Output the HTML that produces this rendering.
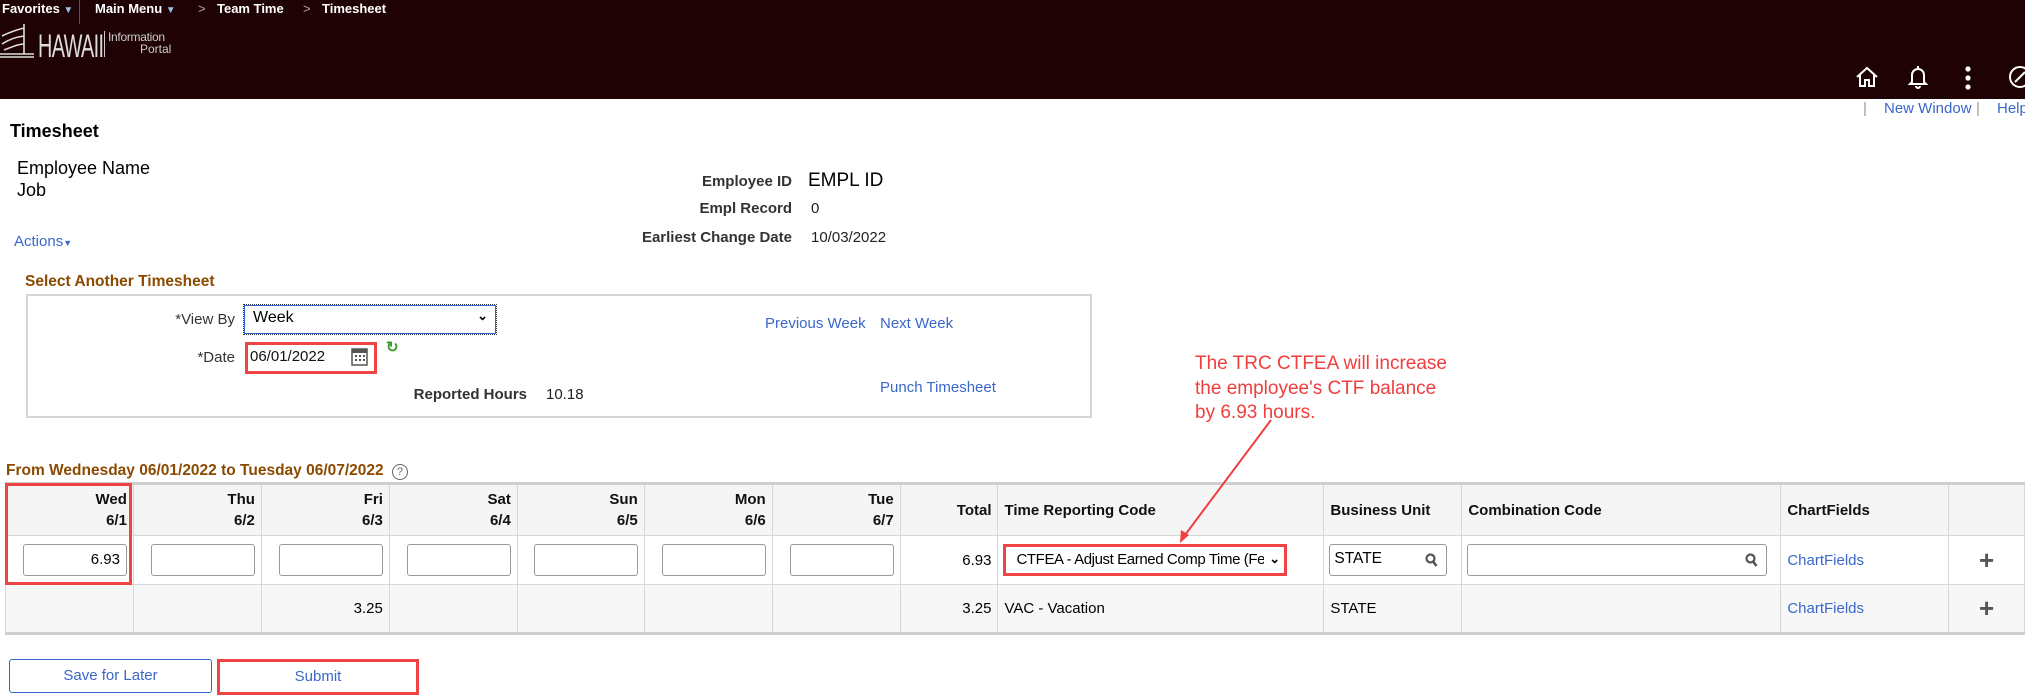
<!DOCTYPE html>
<html><head><meta charset="utf-8"><style>
*{margin:0;padding:0;box-sizing:border-box}
body{width:2025px;height:700px;position:relative;overflow:hidden;background:#fff;font-family:"Liberation Sans",Arial,sans-serif;color:#000}
.a{position:absolute;white-space:nowrap}
.hdr{position:absolute;left:0;top:0;width:2025px;height:99px;background:#1f0304}
.nav{color:#fff;font-size:13px;font-weight:bold;top:1px}
.lnk{color:#3a67c9}
.lbl{color:#333;font-weight:bold;font-size:15px}
.v{font-size:15px;color:#222}
.brown{color:#8b4a00;font-weight:bold;font-size:15.5px}
table{position:absolute;left:5px;top:482px;border-collapse:collapse;table-layout:fixed;border-top:3px solid #cfcfcf;border-bottom:3px solid #cfcfcf}
td,th{border:1px solid #d8d8d8;font-size:15px;padding:0 6px}
th{background:#f5f5f5;height:52px;font-weight:bold;color:#111;line-height:21px}
th.r,td.r{text-align:right}
th.l,td.l{text-align:left}
tr.r1 td{height:49px;background:#fff}
tr.r2 td{height:49px;background:#f7f7f7}
.inp{display:inline-block;width:104px;height:32px;border:1px solid #999;border-radius:3px;background:#fff;text-align:right;padding:5px 6px;vertical-align:middle;font-size:15px;line-height:20px}
.red{position:absolute;border:3px solid #ef4444}
</style></head><body>
<div class="hdr"></div>
<div class="a nav" style="left:2px">Favorites <span style="color:#9cc1e6;font-size:10px">▼</span></div>
<div style="position:absolute;left:79px;top:0;width:1px;height:24px;background:#555"></div>
<div class="a nav" style="left:95px">Main Menu <span style="color:#9cc1e6;font-size:10px">▼</span></div>
<div class="a nav" style="left:198px;color:#aaa;font-weight:normal">&gt;</div>
<div class="a nav" style="left:217px">Team Time</div>
<div class="a nav" style="left:303px;color:#aaa;font-weight:normal">&gt;</div>
<div class="a nav" style="left:322px">Timesheet</div>
<svg class="a" style="left:0;top:24px" width="40" height="36" viewBox="0 0 40 36" fill="none" stroke="#ddd" stroke-width="1.6"><path d="M24 0v30M24 4c-8 2-16 5-22 8M24 12c-8 1-16 4-22 8M24 20c-6 0-12 3-20 6M0 30h34M0 33h34"/></svg>
<div class="a" style="left:38px;top:28px;color:#ddd;font-size:32px;letter-spacing:-1px;transform:scaleX(0.62);transform-origin:left">HAWAII</div>
<div class="a" style="left:104px;top:31px;width:1px;height:26px;background:#ccc"></div>
<div class="a" style="left:108px;top:30px;color:#ccc;font-size:12px;letter-spacing:-.3px">Information</div>
<div class="a" style="left:140px;top:42px;color:#ccc;font-size:12px">Portal</div>
<svg class="a" style="left:1855px;top:66px" width="24" height="22" viewBox="0 0 24 22" fill="none" stroke="#fff" stroke-width="2"><path d="M2 11L12 2l10 9M5 9v11h5v-6h4v6h5V9"/></svg>
<svg class="a" style="left:1907px;top:64px" width="22" height="26" viewBox="0 0 22 26" fill="none" stroke="#fff" stroke-width="2"><path d="M11 2v2M5 18V11a6 6 0 0 1 12 0v7l2 2H3zM9 22a2 2 0 0 0 4 0"/></svg>
<svg class="a" style="left:1964px;top:66px" width="8" height="24"><circle cx="4" cy="3" r="2.6" fill="#fff"/><circle cx="4" cy="12" r="2.6" fill="#fff"/><circle cx="4" cy="21" r="2.6" fill="#fff"/></svg>
<svg class="a" style="left:2008px;top:65px" width="24" height="24" fill="none" stroke="#fff" stroke-width="2"><circle cx="12" cy="12" r="10"/><path d="M7 17l10-10"/></svg>
<div class="a" style="left:1863px;top:100px;color:#999;font-size:15px">|</div>
<div class="a lnk" style="left:1884px;top:100px;font-size:15px">New Window</div>
<div class="a" style="left:1976px;top:100px;color:#999;font-size:15px">|</div>
<div class="a lnk" style="left:1997px;top:100px;font-size:15px">Help</div>

<div class="a" style="left:10px;top:121px;font-size:18px;font-weight:bold">Timesheet</div>
<div class="a" style="left:17px;top:158px;font-size:18px">Employee Name</div>
<div class="a" style="left:17px;top:180px;font-size:18px">Job</div>
<div class="a lnk" style="left:14px;top:233px;font-size:15px">Actions<span style="font-size:9px">▼</span></div>
<div class="a lbl" style="right:1233px;top:173px">Employee ID</div>
<div class="a" style="left:808px;top:170px;font-size:19px">EMPL ID</div>
<div class="a lbl" style="right:1233px;top:200px">Empl Record</div>
<div class="a v" style="left:811px;top:200px">0</div>
<div class="a lbl" style="right:1233px;top:229px">Earliest Change Date</div>
<div class="a v" style="left:811px;top:229px">10/03/2022</div>

<div class="a brown" style="left:25px;top:273px">Select Another Timesheet</div>
<div class="a" style="left:26px;top:294px;width:1066px;height:124px;border:2px solid #d6d6d6"></div>
<div class="a lbl" style="right:1790px;top:311px;font-weight:normal;color:#333">*View By</div>
<div class="a" style="left:244px;top:305px;width:252px;height:29px;border:1px solid #3366cc;outline:1px dotted #333;padding:3px 8px;font-size:16px">Week<span style="position:absolute;right:7px;top:2px;font-size:13px;font-weight:bold">⌄</span></div>
<div class="a lbl" style="right:1790px;top:349px;font-weight:normal;color:#333">*Date</div>
<div class="red" style="left:245px;top:342px;width:132px;height:32px"></div>
<div class="a v" style="left:250px;top:348px;color:#111">06/01/2022</div>
<svg class="a" style="left:351px;top:346px" width="17" height="20"><rect x="1" y="3" width="15" height="16" fill="none" stroke="#555" stroke-width="1.5"/><rect x="1" y="3" width="15" height="4" fill="#555"/><g fill="#555"><rect x="4" y="9" width="2" height="2"/><rect x="8" y="9" width="2" height="2"/><rect x="12" y="9" width="2" height="2"/><rect x="4" y="13" width="2" height="2"/><rect x="8" y="13" width="2" height="2"/><rect x="12" y="13" width="2" height="2"/></g></svg>
<div class="a" style="left:386px;top:338px;color:#3a9a2a;font-size:15px;font-weight:bold">↻</div>
<div class="a lbl" style="right:1498px;top:386px">Reported Hours</div>
<div class="a v" style="left:546px;top:386px">10.18</div>
<div class="a lnk" style="left:765px;top:315px;font-size:15px">Previous Week</div>
<div class="a lnk" style="left:880px;top:315px;font-size:15px">Next Week</div>
<div class="a lnk" style="left:880px;top:379px;font-size:15px">Punch Timesheet</div>

<div class="a" style="left:1195px;top:352px;color:#f03e3e;font-size:19px;line-height:24.5px">The TRC CTFEA will increase<br>the employee's CTF balance<br>by 6.93 hours.</div>

<div class="a brown" style="left:6px;top:462px">From Wednesday 06/01/2022 to Tuesday 06/07/2022 <span style="display:inline-block;width:16px;height:16px;border:1px solid #666;border-radius:50%;font-size:11px;color:#666;text-align:center;line-height:14px;font-weight:normal;margin-left:4px">?</span></div>

<table>
<colgroup><col style="width:128px"><col style="width:128px"><col style="width:128px"><col style="width:128px"><col style="width:127px"><col style="width:128px"><col style="width:128px"><col style="width:98px"><col style="width:326px"><col style="width:138px"><col style="width:319px"><col style="width:168px"><col style="width:76px"></colgroup>
<tr><th class="r">Wed<br>6/1</th><th class="r">Thu<br>6/2</th><th class="r">Fri<br>6/3</th><th class="r">Sat<br>6/4</th><th class="r">Sun<br>6/5</th><th class="r">Mon<br>6/6</th><th class="r">Tue<br>6/7</th><th class="r">Total</th><th class="l">Time Reporting Code</th><th class="l">Business Unit</th><th class="l">Combination Code</th><th class="l">ChartFields</th><th></th></tr>
<tr class="r1"><td class="r"><span class="inp">6.93</span></td><td class="r"><span class="inp"></span></td><td class="r"><span class="inp"></span></td><td class="r"><span class="inp"></span></td><td class="r"><span class="inp"></span></td><td class="r"><span class="inp"></span></td><td class="r"><span class="inp"></span></td><td class="r">6.93</td>
<td class="l" style="padding-left:5px"><div style="position:relative;width:284px;height:32px;border:3px solid #ef4444;padding:4px 10px;font-size:15px;letter-spacing:-0.4px;overflow:hidden;white-space:nowrap">CTFEA - Adjust Earned Comp Time (Fe<span style="position:absolute;right:0;top:0;background:#fff;width:20px;height:26px;font-weight:bold;font-size:13px;line-height:24px;text-align:center">⌄</span></div></td>
<td class="l" style="padding-left:5px"><div style="position:relative;width:118px;height:32px;border:1px solid #999;border-radius:3px;padding:5px 4px;font-size:15.5px">STATE<svg style="position:absolute;right:8px;top:8px" width="13" height="14"><circle cx="5.5" cy="5.5" r="4" fill="none" stroke="#555" stroke-width="2.2"/><path d="M8.5 9l3 4" stroke="#555" stroke-width="2.6"/></svg></div></td>
<td class="l" style="padding-left:5px"><div style="position:relative;width:300px;height:32px;border:1px solid #999;border-radius:3px"><svg style="position:absolute;right:8px;top:8px" width="13" height="14"><circle cx="5.5" cy="5.5" r="4" fill="none" stroke="#555" stroke-width="2.2"/><path d="M8.5 9l3 4" stroke="#555" stroke-width="2.6"/></svg></div></td>
<td class="l lnk">ChartFields</td><td style="text-align:center;color:#555;font-size:26px;font-weight:bold">+</td></tr>
<tr class="r2"><td></td><td></td><td class="r">3.25</td><td></td><td></td><td></td><td></td><td class="r">3.25</td><td class="l">VAC - Vacation</td><td class="l">STATE</td><td></td><td class="l lnk">ChartFields</td><td style="text-align:center;color:#555;font-size:26px;font-weight:bold">+</td></tr>
</table>
<div class="red" style="left:5px;top:483px;width:127px;height:102px"></div>
<svg class="a" style="left:0;top:0;z-index:5" width="2025" height="700"><path d="M1271 420L1185 535" stroke="#f03e3e" stroke-width="2"/><path d="M1180 543l1-13 8 5z" fill="#f03e3e"/></svg>

<div class="a lnk" style="left:9px;top:659px;width:203px;height:34px;border:1px solid #3a67c9;border-radius:3px;text-align:center;line-height:32px;font-size:15px">Save for Later</div>
<div class="red" style="left:217px;top:659px;width:202px;height:36px"></div>
<div class="a lnk" style="left:217px;top:659px;width:202px;line-height:36px;text-align:center;font-size:15px">Submit</div>
</body></html>
